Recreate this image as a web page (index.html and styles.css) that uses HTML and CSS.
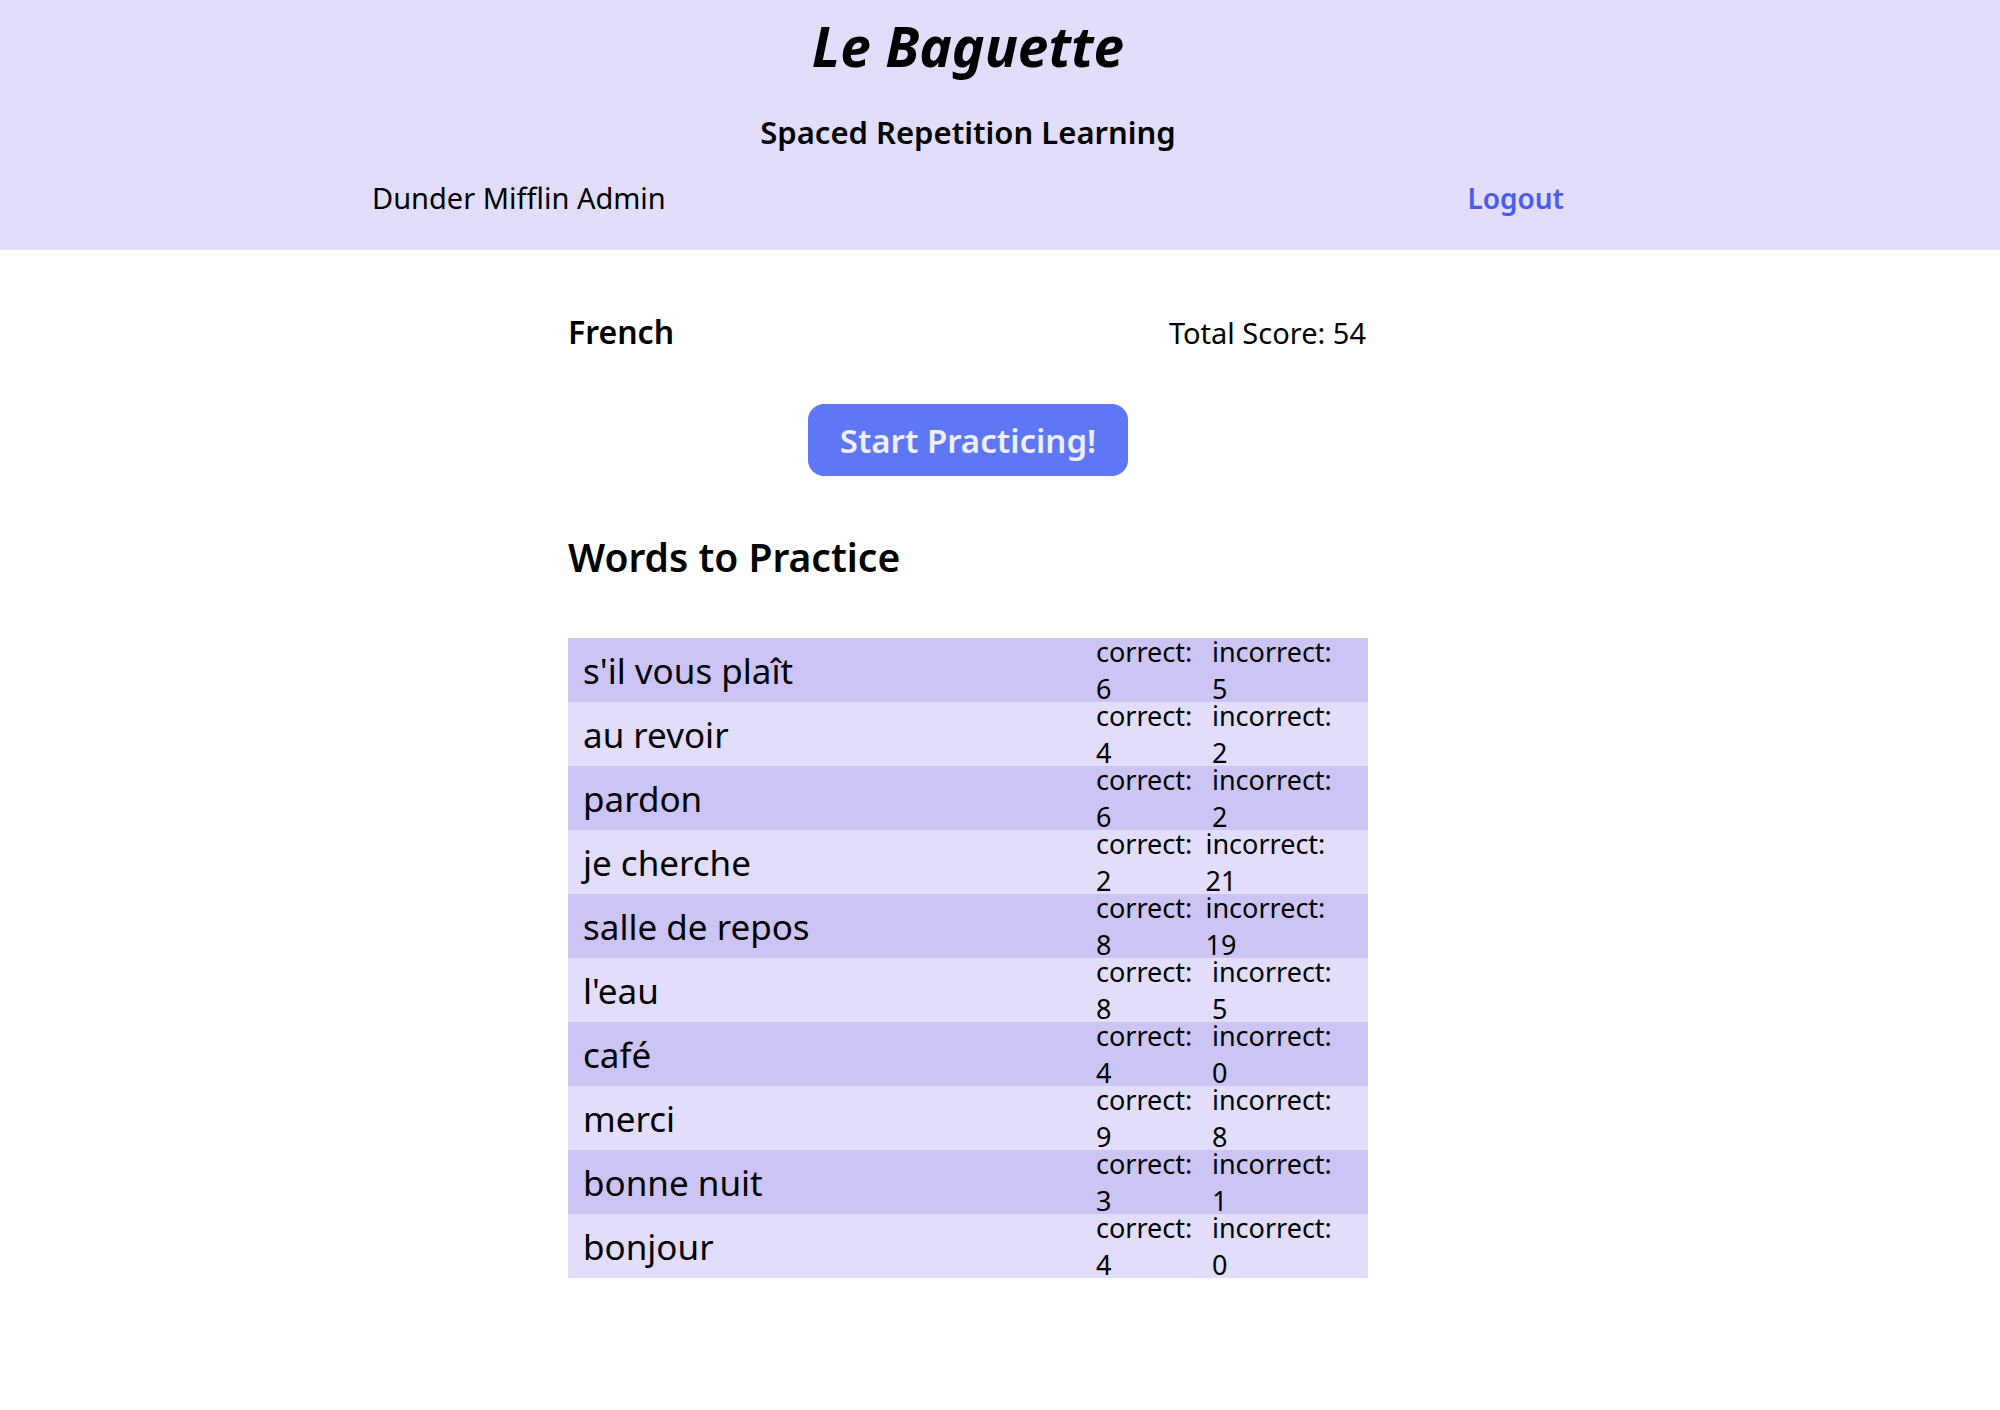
FILE: index.html
```html
<!DOCTYPE html>
<html lang="en">
<head>
<meta charset="utf-8">
<title>Le Baguette</title>
<link rel="stylesheet" href="styles.css">
</head>
<body>
<header class="site-header">
  <div class="header-inner">
    <h1 class="brand">Le Baguette</h1>
    <h2 class="tagline">Spaced Repetition Learning</h2>
    <nav class="user-nav">
      <span class="user-name">Dunder Mifflin Admin</span>
      <a class="logout" href="#">Logout</a>
    </nav>
  </div>
</header>
<div class="page">
  <main class="dashboard">
    <div class="lang-row">
      <h3 class="lang-name">French</h3>
      <span class="total-score">Total Score: 54</span>
    </div>
    <div class="start-wrap">
      <a class="start-btn" href="#">Start Practicing!</a>
    </div>
    <h2 class="section-title">Words to Practice</h2>
    <ul class="word-list">
      <li class="word-row"><span class="word">s'il vous plaît</span><div class="stats"><span class="stat">correct: 6</span><span class="stat">incorrect: 5</span></div></li>
      <li class="word-row"><span class="word">au revoir</span><div class="stats"><span class="stat">correct: 4</span><span class="stat">incorrect: 2</span></div></li>
      <li class="word-row"><span class="word">pardon</span><div class="stats"><span class="stat">correct: 6</span><span class="stat">incorrect: 2</span></div></li>
      <li class="word-row"><span class="word">je cherche</span><div class="stats"><span class="stat">correct: 2</span><span class="stat">incorrect: 21</span></div></li>
      <li class="word-row"><span class="word">salle de repos</span><div class="stats"><span class="stat">correct: 8</span><span class="stat">incorrect: 19</span></div></li>
      <li class="word-row"><span class="word">l'eau</span><div class="stats"><span class="stat">correct: 8</span><span class="stat">incorrect: 5</span></div></li>
      <li class="word-row"><span class="word">café</span><div class="stats"><span class="stat">correct: 4</span><span class="stat">incorrect: 0</span></div></li>
      <li class="word-row"><span class="word">merci</span><div class="stats"><span class="stat">correct: 9</span><span class="stat">incorrect: 8</span></div></li>
      <li class="word-row"><span class="word">bonne nuit</span><div class="stats"><span class="stat">correct: 3</span><span class="stat">incorrect: 1</span></div></li>
      <li class="word-row"><span class="word">bonjour</span><div class="stats"><span class="stat">correct: 4</span><span class="stat">incorrect: 0</span></div></li>
    </ul>
  </main>
</div>
</body>
</html>
```
FILE: styles.css
```css
html, body {
  margin: 0;
  padding: 0;
}
body {
  font-family: "Noto Sans", "Open Sans", sans-serif;
  color: #000;
  background: #fff;
}
.site-header {
  background: #e1ddfb;
}
.header-inner {
  width: 1936px;
  display: flex;
  flex-direction: column;
  align-items: center;
  padding: 8px 0 32px;
}
.brand {
  margin: 0;
  font-size: 55px;
  line-height: 75px;
  font-style: italic;
  font-weight: 700;
}
.tagline {
  margin: 28px 0 0;
  font-size: 31px;
  line-height: 42px;
  font-weight: 600;
}
.user-nav {
  align-self: stretch;
  display: flex;
  justify-content: space-between;
  align-items: baseline;
  padding: 0 372px;
  margin-top: 25px;
  font-size: 29px;
  line-height: 40px;
}
.logout {
  color: #4a5cf0;
  font-size: 28px;
  font-weight: 600;
  text-decoration: none;
}
.page {
  width: 1936px;
}
.dashboard {
  width: 800px;
  margin: 0 auto;
  padding-top: 60px;
}
.lang-row {
  display: flex;
  justify-content: space-between;
  align-items: baseline;
  padding-right: 2px;
}
.lang-name {
  margin: 0;
  font-size: 32px;
  line-height: 44px;
  font-weight: 600;
}
.total-score {
  font-size: 29px;
  line-height: 40px;
}
.start-wrap {
  display: flex;
  justify-content: center;
  margin-top: 50px;
}
.start-btn {
  display: flex;
  align-items: center;
  justify-content: center;
  width: 320px;
  height: 72px;
  box-sizing: border-box;
  border-radius: 16px;
  background: #5e77f5;
  color: #eeeeff;
  font-size: 33px;
  font-weight: 600;
  text-decoration: none;
}
.section-title {
  margin: 54px 0 0;
  font-size: 39px;
  line-height: 53px;
  font-weight: 600;
}
.word-list {
  list-style: none;
  margin: 55px 0 0;
  padding: 0;
  display: flex;
  flex-direction: column;
}
.word-row {
  display: flex;
  justify-content: space-between;
  align-items: center;
  height: 64px;
  padding: 0 17px 0 15px;
  background: #e1ddfb;
}
.word-row:nth-child(odd) {
  background: #cdc4f6;
}
.word {
  font-size: 35px;
}
.stats {
  display: flex;
  width: 255px;
  font-size: 27px;
  line-height: 37px;
}
.stat {
  flex: 1 1 auto;
}
```
